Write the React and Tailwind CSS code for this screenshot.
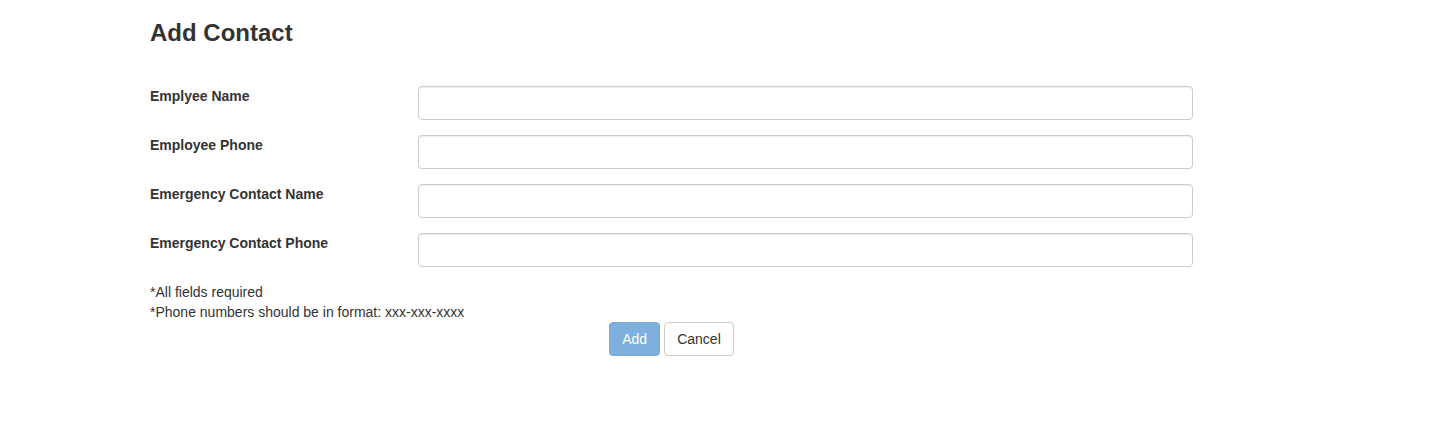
import React from "react";

const fields = [
  "Emplyee Name",
  "Employee Phone",
  "Emergency Contact Name",
  "Emergency Contact Phone",
];

const App = () => {
  return (
    <div
      className="min-h-[437px] bg-white text-[14px] leading-[20px] text-[#333]"
      style={{ fontFamily: '"Liberation Sans", Arial, sans-serif' }}
    >
      <div className="mx-auto w-[1170px] px-[15px]">
        <h3 className="mt-[20px] mb-[10px] text-[24px] leading-[26.4px] font-bold">
          Add Contact
        </h3>
        <form className="w-[1043px] pt-[30px]" onSubmit={(e) => e.preventDefault()}>
          {fields.map((f) => (
            <div key={f} className="mb-[15px] flex">
              <label className="w-[268px] shrink-0 font-bold">{f}</label>
              <input
                type="text"
                className="h-[34px] w-[775px] rounded-[4px] border border-[#ccc] bg-white px-3 shadow-[inset_0_1px_1px_rgba(0,0,0,0.075)] outline-none"
              />
            </div>
          ))}
          <p>*All fields required</p>
          <p>*Phone numbers should be in format: xxx-xxx-xxxx</p>
          <div className="flex justify-center gap-[4px]">
            <button
              type="submit"
              className="h-[34px] rounded-[4px] border border-[#7aa9d4] bg-[#7db0dd] px-[12px] text-white"
            >
              Add
            </button>
            <button
              type="button"
              className="h-[34px] rounded-[4px] border border-[#ccc] bg-white px-[12px] text-[#333]"
            >
              Cancel
            </button>
          </div>
        </form>
      </div>
    </div>
  );
};

export default App;
